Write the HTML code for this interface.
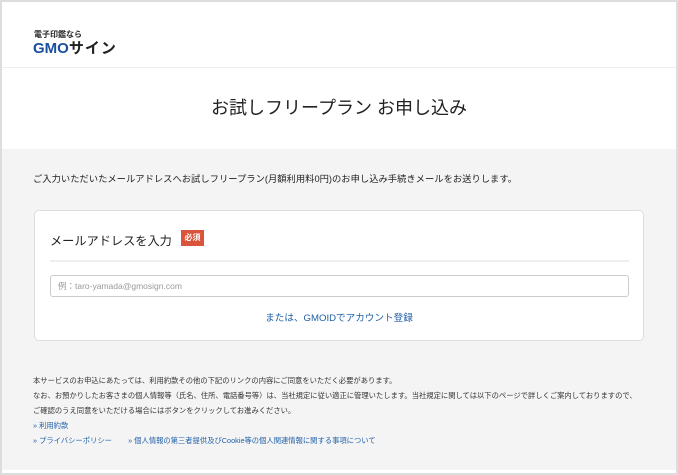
<!DOCTYPE html>
<html><head><meta charset="utf-8"><style>
*{margin:0;padding:0;box-sizing:border-box}
body{width:678px;height:475px;background:#ddd;font-family:"Liberation Sans","Noto Sans CJK JP",sans-serif;position:relative;overflow:hidden}
.frame{position:absolute;left:2px;top:2px;width:674px;height:471px;background:#fff}
.hdr{position:absolute;left:0;top:0;width:674px;height:66px;border-bottom:1px solid #eee}
.logo1{position:absolute;left:32px;top:27px;font-size:8px;color:#222;font-weight:bold}
.logo2{position:absolute;left:31px;top:35px;font-size:15px;color:#1a4fa0;font-weight:bold;letter-spacing:0}
.logo2 span{color:#222;letter-spacing:1px}
.title{position:absolute;left:0;width:674px;top:92px;text-align:center;font-size:18px;color:#222}
.gray{position:absolute;left:0;top:147px;width:674px;height:321px;background:#f4f4f4}
.intro{position:absolute;left:31px;top:22px;font-size:9.3px;color:#222}
.card{position:absolute;left:32px;top:61px;width:610px;height:131px;background:#fff;border:1px solid #ddd;border-radius:5px}
.lbl{position:absolute;left:15px;top:20px;font-size:12.2px;color:#222}
.badge{position:absolute;left:146px;top:19px;width:23px;height:16px;background:#d9543a;color:#fff;font-size:8px;font-weight:bold;text-align:center;line-height:16px}
.div{position:absolute;left:15px;top:49px;width:579px;height:2px;background:#eee}
.inp{position:absolute;left:15px;top:64px;width:579px;height:22px;border:1px solid #ccc;border-radius:3px;font-size:8.5px;color:#999;padding-left:7px;line-height:20px}
.lnk{position:absolute;left:0;width:608px;top:99px;text-align:center;font-size:9.6px;color:#1f5fa8}
.foot{position:absolute;left:31px;top:224px;font-size:7.3px;color:#333;line-height:15px}
.foot a{color:#1f5fa8;text-decoration:none}
</style></head><body>
<div class="frame">
<div class="hdr"><div class="logo1">電子印鑑なら</div><div class="logo2">GMO<span>サイン</span></div></div>
<div class="title">お試しフリープラン お申し込み</div>
<div class="gray">
<div class="intro">ご入力いただいたメールアドレスへお試しフリープラン(月額利用料0円)のお申し込み手続きメールをお送りします。</div>
<div class="card">
<div class="lbl">メールアドレスを入力</div><div class="badge">必須</div>
<div class="div"></div>
<div class="inp">例：taro-yamada@gmosign.com</div>
<div class="lnk">または、GMOIDでアカウント登録</div>
</div>
<div class="foot">本サービスのお申込にあたっては、利用約款その他の下記のリンクの内容にご同意をいただく必要があります。<br>なお、お預かりしたお客さまの個人情報等（氏名、住所、電話番号等）は、当社規定に従い適正に管理いたします。当社規定に関しては以下のページで詳しくご案内しておりますので、<br>ご確認のうえ同意をいただける場合にはボタンをクリックしてお進みください。<br><a>» 利用約款</a><br><a>» プライバシーポリシー</a>&nbsp;&nbsp;&nbsp;&nbsp;&nbsp;&nbsp;&nbsp;&nbsp;<a>» 個人情報の第三者提供及びCookie等の個人関連情報に関する事項について</a></div>
</div>
</div>
</body></html>
